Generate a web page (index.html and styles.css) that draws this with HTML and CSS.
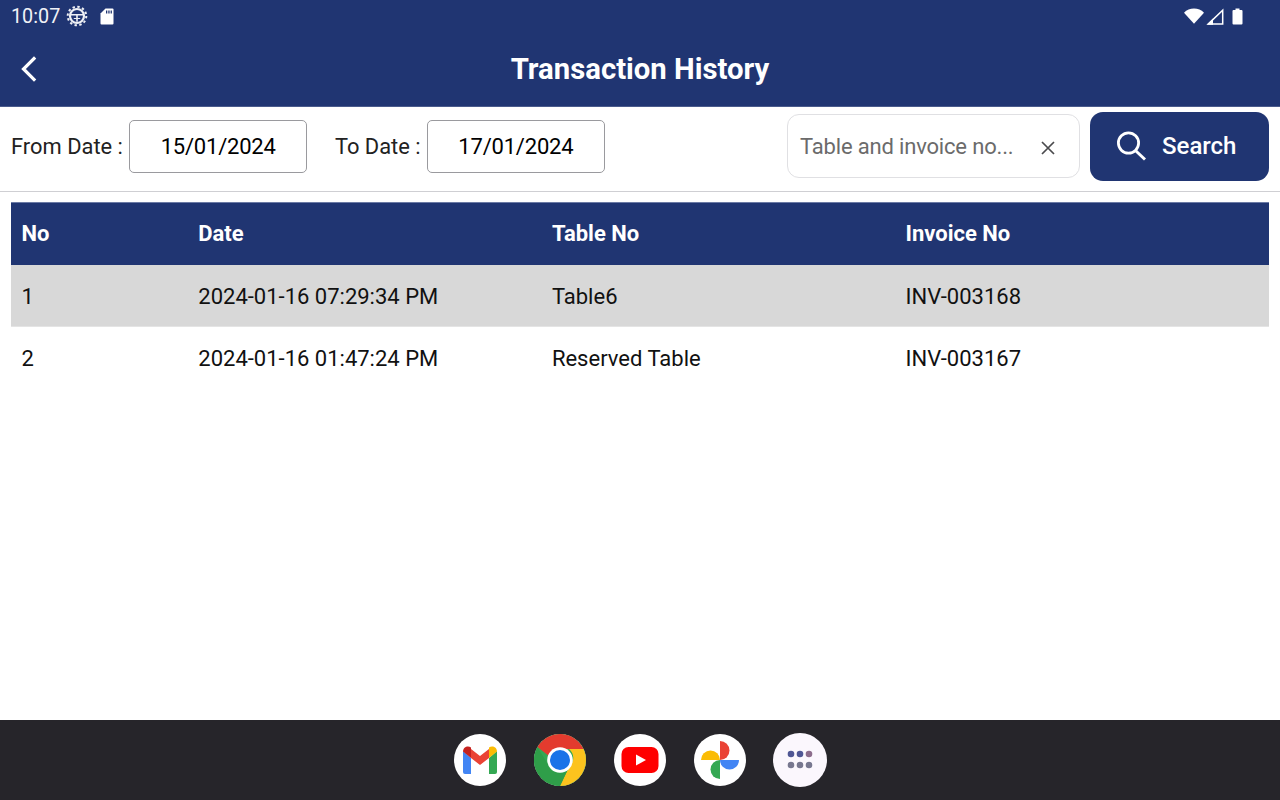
FILE: index.html
```html
<!DOCTYPE html>
<html lang="en">
<head>
<meta charset="utf-8">
<title>Transaction History</title>
<link rel="stylesheet" href="styles.css">
</head>
<body>
<div class="screen">
  <header class="appbar">
    <div class="status">
      <span class="clock">10:07</span>
      <svg class="ic-gear" width="22" height="22" viewBox="0 0 22 22"><g fill="none" stroke="#eef0f5"><circle cx="11" cy="11" r="9.300" stroke-width="2" stroke-dasharray="2.400 2.470"/><circle cx="11" cy="11" r="7" stroke-width="2.200"/><path d="M5 9.800h12M11 9.800v7" stroke-width="1.600"/><path d="M7.800 13.500h6.400" stroke-width="1"/></g></svg>
      <svg class="ic-sd" width="14" height="17" viewBox="0 0 14 17"><path fill="#fff" d="M5.500.5h7a1 1 0 0 1 1 1v14a1 1 0 0 1-1 1h-11a1 1 0 0 1-1-1V5.500z"/><path fill="#203572" d="M6 2.500h1.300v3H6zM8.300 2.500h1.300v3H8.300zM10.600 2.500h1.300v3h-1.300z"/></svg>
      <span class="spacer"></span>
      <svg class="ic-wifi" width="20" height="16" viewBox="0 0 20 16"><path fill="#fff" d="M0 4.800C2.700 2 6.200.6 10 .6s7.300 1.400 10 4.200L10 15.800z"/></svg>
      <svg class="ic-signal" width="18" height="17" viewBox="0 0 18 17"><path fill="none" stroke="#fff" stroke-width="1.500" d="M16.700 2.200v13.900H2.200z"/><path fill="#fff" d="M1 16.800L7 10.500v6.300z"/></svg>
      <svg class="ic-batt" width="11" height="17" viewBox="0 0 11 17"><path fill="#fff" d="M3.500.5h4v1.500h2a1 1 0 0 1 1 1v12.500a1 1 0 0 1-1 1h-8a1 1 0 0 1-1-1V3a1 1 0 0 1 1-1h2z"/></svg>
    </div>
    <div class="titlebar">
      <svg class="ic-back" width="18" height="28" viewBox="0 0 18 28"><path fill="none" stroke="#fff" stroke-width="3.200" stroke-linecap="square" d="M15 3.500L4.500 14 15 24.500"/></svg>
      <h1 class="title">Transaction History</h1>
    </div>
  </header>

  <section class="filters">
    <label class="flabel">From Date :</label>
    <div class="datebox">15/01/2024</div>
    <label class="flabel flabel-to">To Date :</label>
    <div class="datebox">17/01/2024</div>
    <span class="spacer"></span>
    <div class="searchbox">
      <span class="placeholder">Table and invoice no...</span>
      <svg class="ic-x" width="14" height="14" viewBox="0 0 14 14"><path fill="none" stroke="#4a4a4d" stroke-width="1.700" d="M1 1l12 12M13 1L1 13"/></svg>
    </div>
    <button class="searchbtn">
      <svg width="32" height="32" viewBox="0 0 32 32"><g fill="none" stroke="#fff"><circle cx="13.500" cy="13" r="10.100" stroke-width="2.800"/><path d="M21 21l9 8.500" stroke-width="3"/></g></svg>
      <span>Search</span>
    </button>
  </section>

  <main class="tablewrap">
    <div class="row head"><div>No</div><div>Date</div><div>Table No</div><div>Invoice No</div></div>
    <div class="row alt"><div>1</div><div>2024-01-16 07:29:34 PM</div><div>Table6</div><div>INV-003168</div></div>
    <div class="row"><div>2</div><div>2024-01-16 01:47:24 PM</div><div>Reserved Table</div><div>INV-003167</div></div>
  </main>

  <footer class="dock">
    <div class="app">
      <svg width="36" height="30" viewBox="0 0 36 30"><path fill="#4285f4" d="M1 6v21a2 2 0 0 0 2 2h6V13z"/><path fill="#34a853" d="M35 6v21a2 2 0 0 1-2 2h-6V13z"/><path fill="#ea4335" d="M9 13v-9L18 11l9-7v9L18 20z"/><path fill="#c5221f" d="M1 6.500C1 2 6 0 9 2.500V13z"/><path fill="#fbbc04" d="M35 6.500C35 2 30 0 27 2.500V13z"/></svg>
    </div>
    <div class="app chrome">
      <svg width="52" height="52" viewBox="0 0 52 52"><circle cx="26" cy="26" r="26" fill="#34a853"/><path fill="#e33b2e" d="M3.500 13A26 26 0 0 1 49.500 15H26a11 11 0 0 0-10.500 7.500z"/><path fill="#fcc31e" d="M49.500 15A26 26 0 0 1 26 52l9.500-20a11 11 0 0 0-.500-17z"/><path fill="#2f9e49" d="M3.500 13l12 20a11 11 0 0 0 20-1l-9.500 20A26 26 0 0 1 3.500 13z"/><circle cx="26" cy="26" r="12.800" fill="#fff"/><circle cx="26" cy="26" r="10" fill="#1a73e8"/></svg>
    </div>
    <div class="app">
      <svg width="38" height="28" viewBox="0 0 38 28"><rect x="0.500" y="1" width="37" height="26" rx="7" fill="#f00"/><path fill="#fff" d="M15 8.500L25 14l-10 5.500z"/></svg>
    </div>
    <div class="app">
      <svg width="40" height="40" viewBox="0 0 40 40"><path fill="#ea4335" d="M20 20V1a9.500 9.500 0 0 1 0 19z"/><path fill="#4285f4" d="M20 20h19a9.500 9.500 0 0 1-19 0z"/><path fill="#34a853" d="M20 20v19a9.500 9.500 0 0 1 0-19z"/><path fill="#fbbc04" d="M20 20H1a9.500 9.500 0 0 1 19 0z"/></svg>
    </div>
    <div class="app apps">
      <svg width="28" height="20" viewBox="0 0 28 20"><circle cx="5" cy="4" r="3.300" fill="#4f5694"/><circle cx="14" cy="4" r="3.300" fill="#4f5694"/><circle cx="23" cy="4" r="3.300" fill="#8c6c8c"/><circle cx="5" cy="15" r="3.300" fill="#77778f"/><circle cx="14" cy="15" r="3.300" fill="#77778f"/><circle cx="23" cy="15" r="3.300" fill="#77778f"/></svg>
    </div>
  </footer>
</div>
</body>
</html>
```
FILE: styles.css
```css
* { box-sizing: border-box; }
html, body { margin: 0; padding: 0; }
body { font-family: Roboto, "Liberation Sans", sans-serif; background: #fff; color: #111; }
.screen { width: 1280px; height: 800px; display: flex; flex-direction: column; overflow: hidden; }
.spacer { flex: 1; }

.appbar { height: 107px; background: #203572; color: #fff; border-bottom: 1px solid #4a5b8c; flex: none; }
.status { height: 32px; display: flex; align-items: center; padding: 0 37px 0 11px; }
.clock { font-size: 19.800px; color: #f0f2f6; width: 55px; }
.ic-gear { margin-right: 12px; }
.ic-wifi { margin-right: 2px; }
.ic-signal { margin-right: 8px; }
.titlebar { height: 74px; position: relative; display: flex; align-items: center; justify-content: center; }
.ic-back { position: absolute; left: 19px; top: 23px; }
.title { margin: 0; font-size: 29.300px; font-weight: 700; line-height: 74px; }

.filters { height: 85px; flex: none; display: flex; align-items: center; padding: 0 11px 6px 11px; border-bottom: 1px solid #cfcfd3; }
.flabel { font-size: 21.900px; color: #222; margin-right: 6px; }
.flabel-to { margin-left: 27.500px; }
.datebox { width: 178.500px; height: 53px; border: 1px solid #9a9a9e; border-radius: 5px; display: flex; align-items: center; justify-content: center; font-size: 22px; color: #000; letter-spacing: -0.200px; }
.searchbox { width: 293px; height: 64px; border: 1.500px solid #e0e0e3; border-radius: 12px; display: flex; align-items: center; padding: 0 24px 0 12px; justify-content: space-between; margin-right: 10px; }
.placeholder { font-size: 22px; color: #6b6b6b; letter-spacing: -0.170px; }
.ic-x { margin-top: 3px; }
.searchbtn { width: 179px; height: 69px; border: 0; border-radius: 13px; background: #203572; color: #fff; display: flex; align-items: center; gap: 15px; padding: 0 0 0 25px; font-family: inherit; font-size: 24px; font-weight: 500; }

.tablewrap { flex: 1; padding: 10px 11px 0 11px; }
.row { display: grid; grid-template-columns: 176.800px 353.600px 353.600px 1fr; height: 62px; align-items: center; font-size: 22px; color: #111; padding-left: 10.500px; }
.row.head { background: #203572; color: #fff; font-weight: 700; border-top: 1px solid #6b7aa5; padding-bottom: 2px; height: 63px; }
.row.alt { background: #d8d8d8; border-bottom: 1px solid #e4e4e4; padding-top: 2px; }

.dock { height: 80px; flex: none; background: #26252a; display: flex; justify-content: center; align-items: center; gap: 28px; }
.app { width: 52px; height: 52px; border-radius: 50%; background: #fff; display: flex; align-items: center; justify-content: center; }
.app.apps { background: #fbf7fd; width: 54px; height: 54px; margin: 0 -1px; }
```
